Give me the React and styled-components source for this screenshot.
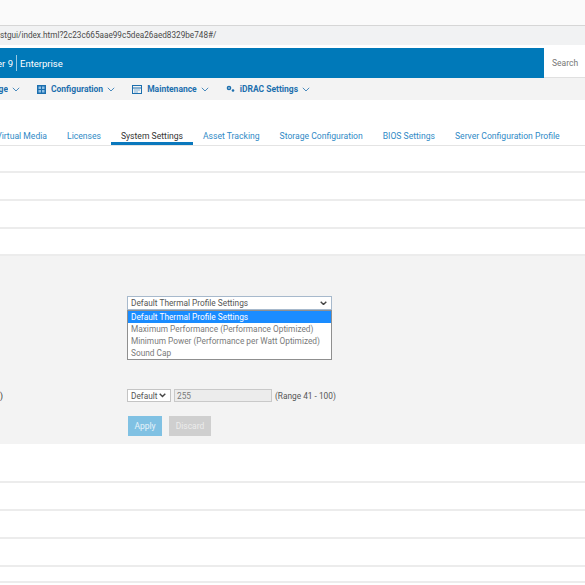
import React from "react";
import styled, { createGlobalStyle } from "styled-components";

const GlobalStyle = createGlobalStyle`
  html, body {
    margin: 0;
    padding: 0;
    background: #ffffff;
    font-family: Roboto, "Liberation Sans", Arial, sans-serif;
  }
`;

const Page = styled.div`
  width: 585px;
  height: 585px;
  overflow: hidden;
  background: #ffffff;
`;

const Chrome = styled.div`
  height: 25px;
  background: #fafafa;
  border-bottom: 1px solid #d6d6d6;
`;

const UrlBar = styled.div`
  height: 19px;
  line-height: 19px;
  background: #f1f2f3;
  color: #4a4a4a;
  font-size: 8.2px;
  white-space: nowrap;
  margin-bottom: 3px;
`;

const Header = styled.header`
  height: 30px;
  display: flex;
  background: #0079b9;
`;

const Brand = styled.div`
  flex: 1;
  display: flex;
  align-items: center;
  color: #ffffff;
  font-size: 9.5px;
`;

const Clipped = styled.span`
  display: inline-flex;
  justify-content: flex-end;
  width: ${(p) => p.$w}px;
  overflow: hidden;
  white-space: nowrap;
`;

const Divider = styled.span`
  width: 1px;
  height: 16px;
  background: rgba(255, 255, 255, 0.6);
  margin: 0 3px 0 3px;
`;

const Search = styled.div`
  width: 41px;
  background: #ffffff;
  display: flex;
  align-items: center;
  padding-left: 8px;
  font-size: 8.5px;
  color: #777777;
  box-sizing: border-box;
  border-bottom: 1px solid #e0e0e0;
`;

const Nav = styled.nav`
  height: 22px;
  display: flex;
  align-items: center;
  gap: 17px;
  background: #f3f3f3;
`;

const NavItem = styled.div`
  display: flex;
  align-items: center;
  gap: 4px;
  color: #1c6fae;
  font-size: 8.5px;
  font-weight: 700;
  white-space: nowrap;
`;

const NavLabel = styled.span`
  margin-left: 1px;
`;

const TabBar = styled.div`
  height: 46px;
  display: flex;
  align-items: flex-end;
  border-bottom: 1px solid #e4e4e4;
  box-sizing: border-box;
`;

const Tab = styled.div`
  padding: 0 10px 1px;
  margin-left: ${(p) => (p.$first ? "-10px" : "0")};
  font-size: 8.6px;
  line-height: 10px;
  color: ${(p) => (p.$active ? "#333333" : "#2f8ac6")};
  border-bottom: 3px solid ${(p) => (p.$active ? "#0a78bd" : "transparent")};
  white-space: nowrap;
`;

const Row = styled.div`
  height: ${(p) => p.$h || 28}px;
  border-bottom: 2px solid #ececec;
  box-sizing: border-box;
`;

const Panel = styled.section`
  height: 188px;
  background: #f3f3f3;
  box-sizing: border-box;
  padding-top: 40px;
  display: grid;
  grid-template-columns: 127px 1fr;
  grid-template-rows: 14px 79px 13px 14px 20px;
  align-content: start;
`;

const Label = styled.div`
  font-size: 8.5px;
  color: #333333;
  display: flex;
  align-items: center;
`;

const Controls = styled.div`
  display: flex;
  align-items: center;
  gap: 3px;
  font-size: 8.3px;
  color: #555555;
`;

const SelectWrap = styled.div`
  position: relative;
  width: ${(p) => p.$w}px;
  height: 100%;
`;

const SelectBox = styled.div`
  height: 100%;
  box-sizing: border-box;
  display: flex;
  align-items: center;
  justify-content: space-between;
  padding: 0 4px 0 3px;
  background: #ffffff;
  border: 1px solid ${(p) => (p.$focus ? "#a7b9cc" : "#c4c4c4")};
  font-size: 8.3px;
  color: #555555;
  white-space: nowrap;
`;

const Options = styled.ul`
  position: absolute;
  top: 100%;
  left: 0;
  right: 0;
  margin: 0;
  padding: 0;
  list-style: none;
  background: #ffffff;
  border: 1px solid #8f8f8f;
  z-index: 2;
`;

const Option = styled.li`
  height: 12px;
  line-height: 12px;
  padding: 0 3px;
  font-size: 8.3px;
  white-space: nowrap;
  color: ${(p) => (p.$selected ? "#ffffff" : "#7a7a7a")};
  background: ${(p) => (p.$selected ? "#1a8cff" : "transparent")};
`;

const TextInput = styled.div`
  width: 98px;
  height: 100%;
  box-sizing: border-box;
  border: 1px solid #c9c9c9;
  background: #ececec;
  color: #7a7a7a;
  font-size: 8.3px;
  display: flex;
  align-items: center;
  padding-left: 2px;
`;

const Buttons = styled.div`
  grid-column: 2;
  grid-row: 5;
  display: flex;
  gap: 7px;
  padding-left: 1px;
`;

const Button = styled.div`
  width: ${(p) => p.$w}px;
  height: 20px;
  display: flex;
  align-items: center;
  justify-content: center;
  font-size: 8.5px;
  background: ${(p) => (p.$primary ? "#80c1e3" : "#cfcfcf")};
  color: ${(p) => (p.$primary ? "#e6f3fa" : "#ececec")};
`;

const Chevron = ({ size = 8, color = "#1c6fae", bold }) => (
  <svg width={size} height={size * 0.6} viewBox="0 0 10 6">
    <polyline
      points="1,1 5,5 9,1"
      fill="none"
      stroke={color}
      strokeWidth={bold ? 2 : 1}
    />
  </svg>
);

const ConfigIcon = () => (
  <svg width="9" height="9" viewBox="0 0 9 9">
    <rect x="0" y="0" width="9" height="9" fill="#1c6fae" />
    <rect x="1.5" y="1.5" width="2.5" height="2.5" fill="#8fc0e6" />
    <rect x="5" y="1.5" width="2.5" height="2.5" fill="#8fc0e6" />
    <rect x="1.5" y="5" width="2.5" height="2.5" fill="#8fc0e6" />
    <rect x="5" y="5" width="2.5" height="2.5" fill="#8fc0e6" />
  </svg>
);

const MaintIcon = () => (
  <svg width="10" height="9" viewBox="0 0 10 9">
    <rect x="0.5" y="0.5" width="9" height="8" fill="none" stroke="#1c6fae" />
    <line x1="0.5" y1="3" x2="9.5" y2="3" stroke="#1c6fae" />
    <line x1="2" y1="5" x2="8" y2="5" stroke="#7fb2da" />
    <line x1="2" y1="7" x2="6" y2="7" stroke="#7fb2da" />
  </svg>
);

const GearIcon = () => (
  <svg width="9" height="8" viewBox="0 0 9 8">
    <circle cx="3" cy="3" r="2.3" fill="#1c6fae" />
    <circle cx="3" cy="3" r="0.8" fill="#f3f3f3" />
    <circle cx="7" cy="5.5" r="1.3" fill="#1c6fae" />
  </svg>
);

const tabs = [
  "Licenses",
  "System Settings",
  "Asset Tracking",
  "Storage Configuration",
  "BIOS Settings",
  "Server Configuration Profile",
];

const profiles = [
  "Default Thermal Profile Settings",
  "Maximum Performance (Performance Optimized)",
  "Minimum Power (Performance per Watt Optimized)",
  "Sound Cap",
];

export default function App() {
  return (
    <Page>
      <GlobalStyle />
      <Chrome />
      <UrlBar>stgui/index.html?2c23c665aae99c5dea26aed8329be748#/</UrlBar>
      <Header>
        <Brand>
          <Clipped $w={13}>Integrated Dell Remote Access Controller 9</Clipped>
          <Divider />
          Enterprise
        </Brand>
        <Search>Search</Search>
      </Header>
      <Nav>
        <NavItem>
          <Clipped $w={8}>Storage</Clipped>
          <Chevron />
        </NavItem>
        <NavItem>
          <ConfigIcon />
          <NavLabel>Configuration</NavLabel>
          <Chevron />
        </NavItem>
        <NavItem>
          <MaintIcon />
          <NavLabel>Maintenance</NavLabel>
          <Chevron />
        </NavItem>
        <NavItem>
          <GearIcon />
          <NavLabel>iDRAC Settings</NavLabel>
          <Chevron />
        </NavItem>
      </Nav>
      <TabBar>
        <Tab $first>
          <Clipped $w={47}>Virtual Media</Clipped>
        </Tab>
        {tabs.map((t) => (
          <Tab key={t} $active={t === "System Settings"}>
            {t}
          </Tab>
        ))}
      </TabBar>
      <Row $h={27} />
      <Row $h={28} />
      <Row $h={28} />
      <Row $h={27} />
      <Panel>
        <Label />
        <Controls>
          <SelectWrap $w={205}>
            <SelectBox $focus>
              {profiles[0]}
              <Chevron size={7} color="#444" bold />
            </SelectBox>
            <Options>
              {profiles.map((p, i) => (
                <Option key={p} $selected={i === 0}>
                  {p}
                </Option>
              ))}
            </Options>
          </SelectWrap>
        </Controls>
        <div />
        <div />
        <Label>
          <Clipped $w={3}>Minimum Fan Speed in PWM (% of Max)</Clipped>
        </Label>
        <Controls>
          <SelectWrap $w={44}>
            <SelectBox>
              Default
              <Chevron size={7} color="#444" bold />
            </SelectBox>
          </SelectWrap>
          <TextInput>255</TextInput>
          (Range 41 - 100)
        </Controls>
        <Buttons>
          <Button $primary $w={34}>Apply</Button>
          <Button $w={42}>Discard</Button>
        </Buttons>
      </Panel>
      <Row $h={39} />
      <Row />
      <Row />
      <Row />
      <Row $h={16} />
    </Page>
  );
}
